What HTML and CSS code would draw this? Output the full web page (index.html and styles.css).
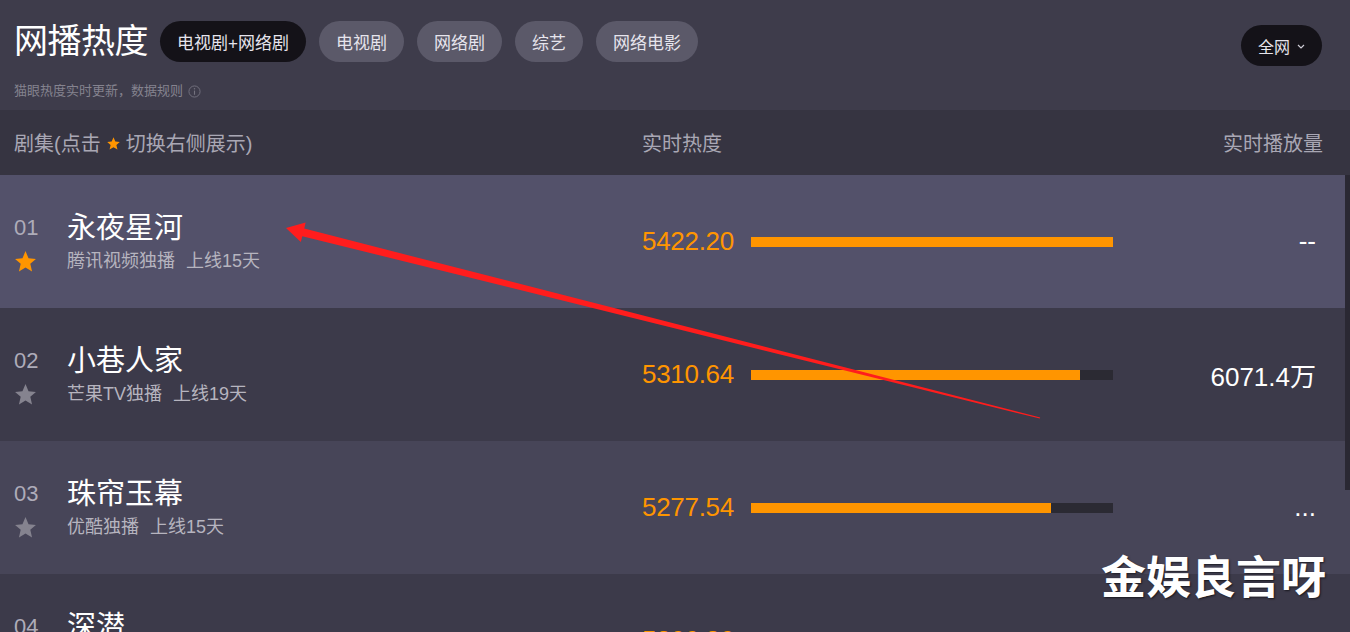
FILE: index.html
```html
<!DOCTYPE html>
<html lang="zh-CN">
<head>
  <meta charset="UTF-8">
  <meta name="viewport" content="width=device-width, initial-scale=1.0">
  <title>网播热度</title>
  <link rel="stylesheet" href="styles.css">
</head>
<body>
  <div class="page">
    <div class="top">
      <div class="top-row">
        <div class="tabs">
          <h1 class="title">网播热度</h1>
          <span class="pill dark">电视剧+网络剧</span>
          <span class="pill">电视剧</span>
          <span class="pill">网络剧</span>
          <span class="pill">综艺</span>
          <span class="pill">网络电影</span>
        </div>
        <span class="pill dark select">全网
          <svg class="chev" viewBox="0 0 8 5" width="8" height="5"><polyline points="1,1 4,4 7,1" fill="none" stroke="#cfcdd6" stroke-width="1.2"/></svg>
        </span>
      </div>
      <p class="note">猫眼热度实时更新，数据规则
        <svg class="info" viewBox="0 0 14 14" width="13" height="13"><circle cx="7" cy="7" r="6" fill="none" stroke="#75737f" stroke-width="1"/><line x1="7" y1="6" x2="7" y2="10.5" stroke="#75737f" stroke-width="1.2"/><circle cx="7" cy="4" r="0.8" fill="#75737f"/></svg>
      </p>
    </div>

    <div class="thead">
      <div class="col-name">剧集(点击
        <svg class="star-sm" viewBox="0 0 24 24" width="15" height="15"><path d="M12 2l2.9 6.9 7.1.6-5.4 4.7 1.7 7.3L12 17.8 5.7 21.5l1.7-7.3L2 9.5l7.1-.6z" fill="#ff9500"/></svg>
        切换右侧展示)</div>
      <div class="col-heat">实时热度</div>
      <div class="col-play">实时播放量</div>
    </div>

    <ul class="list">
      <li class="row on">
        <div class="col-name">
          <div class="rank">
            <span class="num">01</span>
            <svg class="star" viewBox="0 0 24 24" width="25" height="25"><path d="M12 2l2.9 6.9 7.1.6-5.4 4.7 1.7 7.3L12 17.8 5.7 21.5l1.7-7.3L2 9.5l7.1-.6z"/></svg>
          </div>
          <div class="info-col">
            <span class="name">永夜星河</span>
            <span class="sub">腾讯视频独播<em>上线15天</em></span>
          </div>
        </div>
        <div class="col-heat">
          <span class="score">5422.20</span>
          <div class="bar"><div class="fill" style="width:100%"></div></div>
        </div>
        <div class="col-play">--</div>
      </li>
      <li class="row">
        <div class="col-name">
          <div class="rank">
            <span class="num">02</span>
            <svg class="star" viewBox="0 0 24 24" width="25" height="25"><path d="M12 2l2.9 6.9 7.1.6-5.4 4.7 1.7 7.3L12 17.8 5.7 21.5l1.7-7.3L2 9.5l7.1-.6z"/></svg>
          </div>
          <div class="info-col">
            <span class="name">小巷人家</span>
            <span class="sub">芒果TV独播<em>上线19天</em></span>
          </div>
        </div>
        <div class="col-heat">
          <span class="score">5310.64</span>
          <div class="bar"><div class="fill" style="width:91%"></div></div>
        </div>
        <div class="col-play">6071.4万</div>
      </li>
      <li class="row alt">
        <div class="col-name">
          <div class="rank">
            <span class="num">03</span>
            <svg class="star" viewBox="0 0 24 24" width="25" height="25"><path d="M12 2l2.9 6.9 7.1.6-5.4 4.7 1.7 7.3L12 17.8 5.7 21.5l1.7-7.3L2 9.5l7.1-.6z"/></svg>
          </div>
          <div class="info-col">
            <span class="name">珠帘玉幕</span>
            <span class="sub">优酷独播<em>上线15天</em></span>
          </div>
        </div>
        <div class="col-heat">
          <span class="score">5277.54</span>
          <div class="bar"><div class="fill" style="width:83%"></div></div>
        </div>
        <div class="col-play">...</div>
      </li>
      <li class="row">
        <div class="col-name">
          <div class="rank">
            <span class="num">04</span>
            <svg class="star" viewBox="0 0 24 24" width="25" height="25"><path d="M12 2l2.9 6.9 7.1.6-5.4 4.7 1.7 7.3L12 17.8 5.7 21.5l1.7-7.3L2 9.5l7.1-.6z"/></svg>
          </div>
          <div class="info-col">
            <span class="name">深潜</span>
            <span class="sub">爱奇艺独播<em>上线8天</em></span>
          </div>
        </div>
        <div class="col-heat">
          <span class="score">5266.86</span>
          <div class="bar"><div class="fill" style="width:81%"></div></div>
        </div>
        <div class="col-play">...</div>
      </li>
    </ul>

    <div class="thumb"></div>
    <div class="mark">金娱良言呀</div>
    <svg class="arrow" viewBox="0 0 1350 632" width="1350" height="632">
      <polygon points="286,228 305.6,222.5 304.3,228.6 1040.2,417.4 1039.8,418.6 302.3,236.2 300.8,242" fill="#ff1d1d"/>
    </svg>
  </div>
</body>
</html>
```

FILE: styles.css
```css
*{
  margin: 0;
  padding: 0;
  box-sizing: border-box;
}
ul{
  list-style: none;
}
body{
  background-color: #3e3c4b;
  font-family: "Liberation Sans", "Noto Sans CJK SC", sans-serif;
  color: #fff;
}
.page{
  position: relative;
  width: 1350px;
  height: 632px;
  overflow: hidden;
  background-color: #3e3c4b;
}
.top{
  height: 110px;
  padding: 21px 28px 0 14px;
}
.top-row{
  display: flex;
  justify-content: space-between;
  align-items: flex-start;
}
.tabs{
  display: flex;
  align-items: center;
  gap: 13px;
}
.title{
  font-size: 34px;
  font-weight: 400;
  line-height: 41px;
  margin-right: -1px;
  letter-spacing: -0.5px;
}
.pill{
  display: flex;
  align-items: center;
  height: 41px;
  padding: 0 17px;
  border-radius: 21px;
  background-color: #5b5969;
  font-size: 17px;
  color: #e6e4ec;
}
.pill.dark{
  background-color: #141218;
}
.select{
  margin-top: 4px;
  gap: 7px;
  font-size: 16px;
}
.chev{
  display: block;
  margin-top: 2px;
}
.note{
  display: flex;
  align-items: center;
  gap: 5px;
  margin-top: 16px;
  font-size: 13px;
  line-height: 18px;
  color: #85838f;
}
.thead{
  display: flex;
  align-items: center;
  height: 65px;
  padding: 0 27px 0 14px;
  background-color: #363441;
  font-size: 20px;
  color: #a9a7b4;
}
.thead .col-name{
  display: flex;
  align-items: center;
  gap: 5px;
}
.star-sm{
  display: block;
  margin-top: 2px;
}
.col-name{
  width: 628px;
  display: flex;
}
.col-heat{
  display: flex;
  align-items: center;
  gap: 17px;
}
.col-play{
  flex: 1;
  text-align: right;
}
.row{
  display: flex;
  align-items: center;
  height: 133px;
  padding: 0 34px 0 14px;
  background-color: #3c3a4a;
}
.row.on{
  background-color: #53516a;
}
.row.alt{
  background-color: #474558;
}
.rank{
  width: 53px;
  display: flex;
  flex-direction: column;
}
.num{
  font-size: 22px;
  line-height: 38px;
  color: #aeacb9;
}
.star{
  display: block;
  height: 28px;
  width: 25px;
  margin-left: -1px;
  padding-top: 1px;
  fill: #85838f;
}
.on .star{
  fill: #ff9500;
}
.info-col{
  display: flex;
  flex-direction: column;
}
.name{
  font-size: 29px;
  line-height: 38px;
  color: #fff;
}
.sub{
  font-size: 18px;
  line-height: 28px;
  color: #b6b4bf;
}
.sub em{
  font-style: normal;
  margin-left: 11px;
}
.score{
  font-size: 26px;
  color: #ff9500;
  letter-spacing: -0.3px;
}
.bar{
  width: 362px;
  height: 10px;
  background-color: #2b2a33;
}
.fill{
  height: 100%;
  background-color: #ff9500;
}
.row .col-play{
  font-size: 26px;
  color: #fff;
}
.thumb{
  position: absolute;
  right: 0;
  top: 175px;
  width: 5px;
  height: 315px;
  background-color: #2a2833;
}
.mark{
  position: absolute;
  right: 24px;
  top: 552px;
  font-size: 45px;
  font-weight: 700;
  line-height: 54px;
  color: #fff;
  text-shadow: 1px 1px 2px rgba(0,0,0,.6);
}
.arrow{
  position: absolute;
  left: 0;
  top: 0;
  pointer-events: none;
}
```
